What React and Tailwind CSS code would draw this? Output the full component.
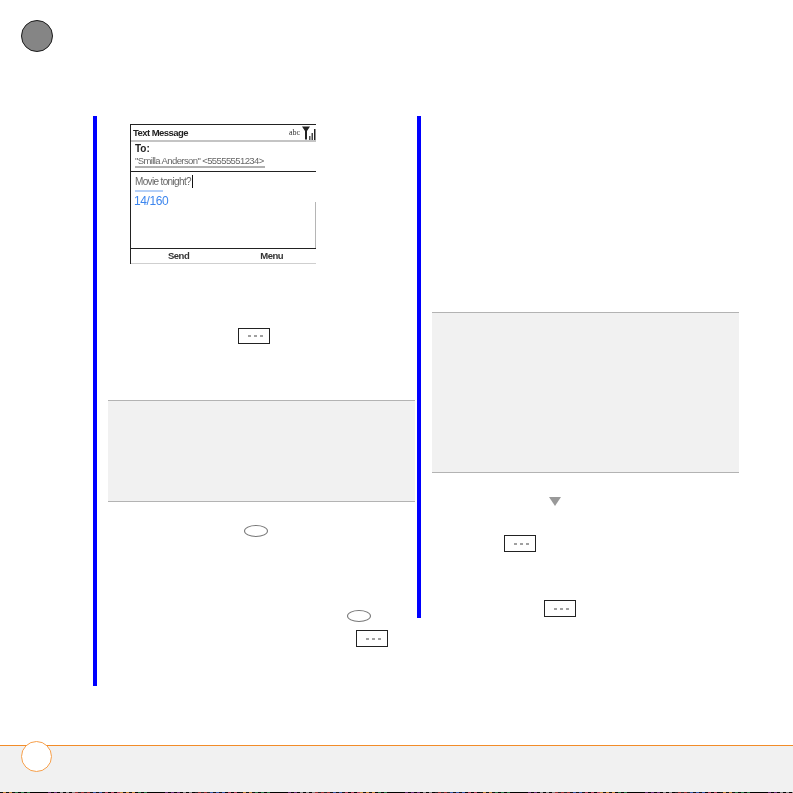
function Key({ className = "" }) {
  return (
    <div className={`w-[32px] border border-[#222222] flex items-center justify-center gap-[3px] pl-[3px] bg-white ${className}`}>
      <span className="w-[3px] h-[2px] bg-[#a0a0a0]" />
      <span className="w-[3px] h-[2px] bg-[#a0a0a0]" />
      <span className="w-[3px] h-[2px] bg-[#a0a0a0]" />
    </div>
  );
}

function Oval({ className = "" }) {
  return <div className={`w-[24px] h-[12px] rounded-[50%] border border-[#777777] bg-white ${className}`} />;
}

function Note({ className = "" }) {
  return <div className={`w-[307px] bg-[#f1f1f1] border-y border-[#b3b3b3] ${className}`} />;
}

function SignalIcon() {
  return (
    <svg width="14" height="14" viewBox="0 0 14 14" className="block">
      <path d="M0 0.5H8L5 5V13.5H3V5Z" fill="#222222" />
      <rect x="7" y="10" width="1.5" height="4" fill="#555555" />
      <rect x="9.5" y="7" width="1.5" height="7" fill="#444444" />
      <rect x="12" y="3" width="1.5" height="11" fill="#222222" />
    </svg>
  );
}

const NOISE = ["#111111", "#6b2f7a", "#111111", "#2f7a4a", "#000000", "#b0405a", "#000000", "#222222", "#c98a3a", "#000000", "#3a5fb0", "#000000", "#8a8a8a", "#000000", "#000000", "#a03030"];

function Noise() {
  return (
    <div className="h-[1px] flex bg-black overflow-hidden">
      {Array.from({ length: 265 }, (_, i) => (
        <span key={i} className="w-[3px] h-[1px] shrink-0" style={{ backgroundColor: NOISE[(i * 7 + (i % 5)) % NOISE.length] }} />
      ))}
    </div>
  );
}

function Phone() {
  return (
    <div className="w-[186px] h-[140px] flex flex-col border-t border-l border-[#222222] bg-white leading-none text-[#333333] font-['Liberation_Sans',sans-serif] blur-[0.3px]">
      <div className="h-[17px] flex items-center justify-between pl-[2px] border-b-2 border-[#c4c4c4]">
        <span className="font-bold text-[#222222] text-[9.5px] tracking-[-0.55px]">Text Message</span>
        <span className="flex items-center gap-[2px]">
          <span className="text-[8px] font-['Liberation_Serif',serif]">abc</span>
          <SignalIcon />
        </span>
      </div>
      <div className="h-[30px] flex flex-col items-start pl-[4px] pt-[2px] border-b border-[#222222]">
        <span className="font-bold text-[10px] text-[#222222]">To:</span>
        <span className="mt-[2px] w-[130px] border-b-2 border-[#b0b0b0] whitespace-nowrap text-[#666666] text-[9.5px] tracking-[-0.6px]">"Smilla Anderson" &lt;55555551234&gt;</span>
      </div>
      <div className="h-[77px] flex border-b border-[#222222]">
        <div className="flex-1 flex flex-col items-start pl-[3px] pt-[3px]">
          <span className="flex items-center text-[#666666] text-[10px] tracking-[-0.65px] pl-[1px]">
            Movie tonight?
            <span className="w-[1px] h-[13px] bg-[#111111] ml-[1px]" />
          </span>
          <span className="w-[28px] h-[2px] bg-[#b5d0f7] ml-[1px] mt-[2px]" />
          <span className="text-[#3d86ee] text-[12px] mt-[3px] tracking-[-0.4px]">14/160</span>
        </div>
        <div className="w-[1px] h-[46px] bg-[#b5b5b5] self-end" />
      </div>
      <div className="flex-1 flex items-center font-bold text-[9.5px] tracking-[-0.5px] text-[#333333] border-b border-[#cfcfcf]">
        <span className="ml-[37px]">Send</span>
        <span className="ml-[71px]">Menu</span>
      </div>
    </div>
  );
}

export default function App() {
  return (
    <div className="w-[793px] h-[793px] flex flex-col bg-white overflow-hidden">
      <header className="h-[116px] pl-[21px] pt-[20px] shrink-0">
        <div className="w-[32px] h-[32px] rounded-full bg-[#858585] border border-[#1c1c1c]" />
      </header>

      <main className="h-[629px] shrink-0 flex pl-[93px] items-start">
        <section className="w-[324px] h-[570px] border-l-4 border-[#0000ff] flex flex-col items-start">
          <div className="ml-[33px] mt-[8px]"><Phone /></div>
          <Key className="ml-[141px] mt-[64px] h-[16px]" />
          <Note className="ml-[11px] mt-[56px] h-[102px]" />
          <Oval className="ml-[147px] mt-[23px]" />
          <Oval className="ml-[250px] mt-[73px]" />
          <Key className="ml-[259px] mt-[8px] h-[17px]" />
        </section>

        <section className="w-[322px] h-[502px] border-l-4 border-[#0000ff] flex flex-col items-start">
          <Note className="ml-[11px] mt-[196px] h-[161px]" />
          <svg width="12" height="9" viewBox="0 0 12 9" className="block ml-[128px] mt-[24px]">
            <path d="M0 0H12L6 9Z" fill="#999999" />
          </svg>
          <Key className="ml-[83px] mt-[29px] h-[17px]" />
          <Key className="ml-[123px] mt-[48px] h-[17px]" />
        </section>
      </main>

      <footer className="flex-1 relative flex flex-col bg-[#f1f1f1]">
        <div className="h-[1px] bg-[#f28c28]" />
        <div className="absolute left-[21px] top-[-4px] w-[31px] h-[31px] rounded-full bg-white border border-[#f7a04b]" />
        <div className="flex-1" />
        <Noise />
      </footer>
    </div>
  );
}
